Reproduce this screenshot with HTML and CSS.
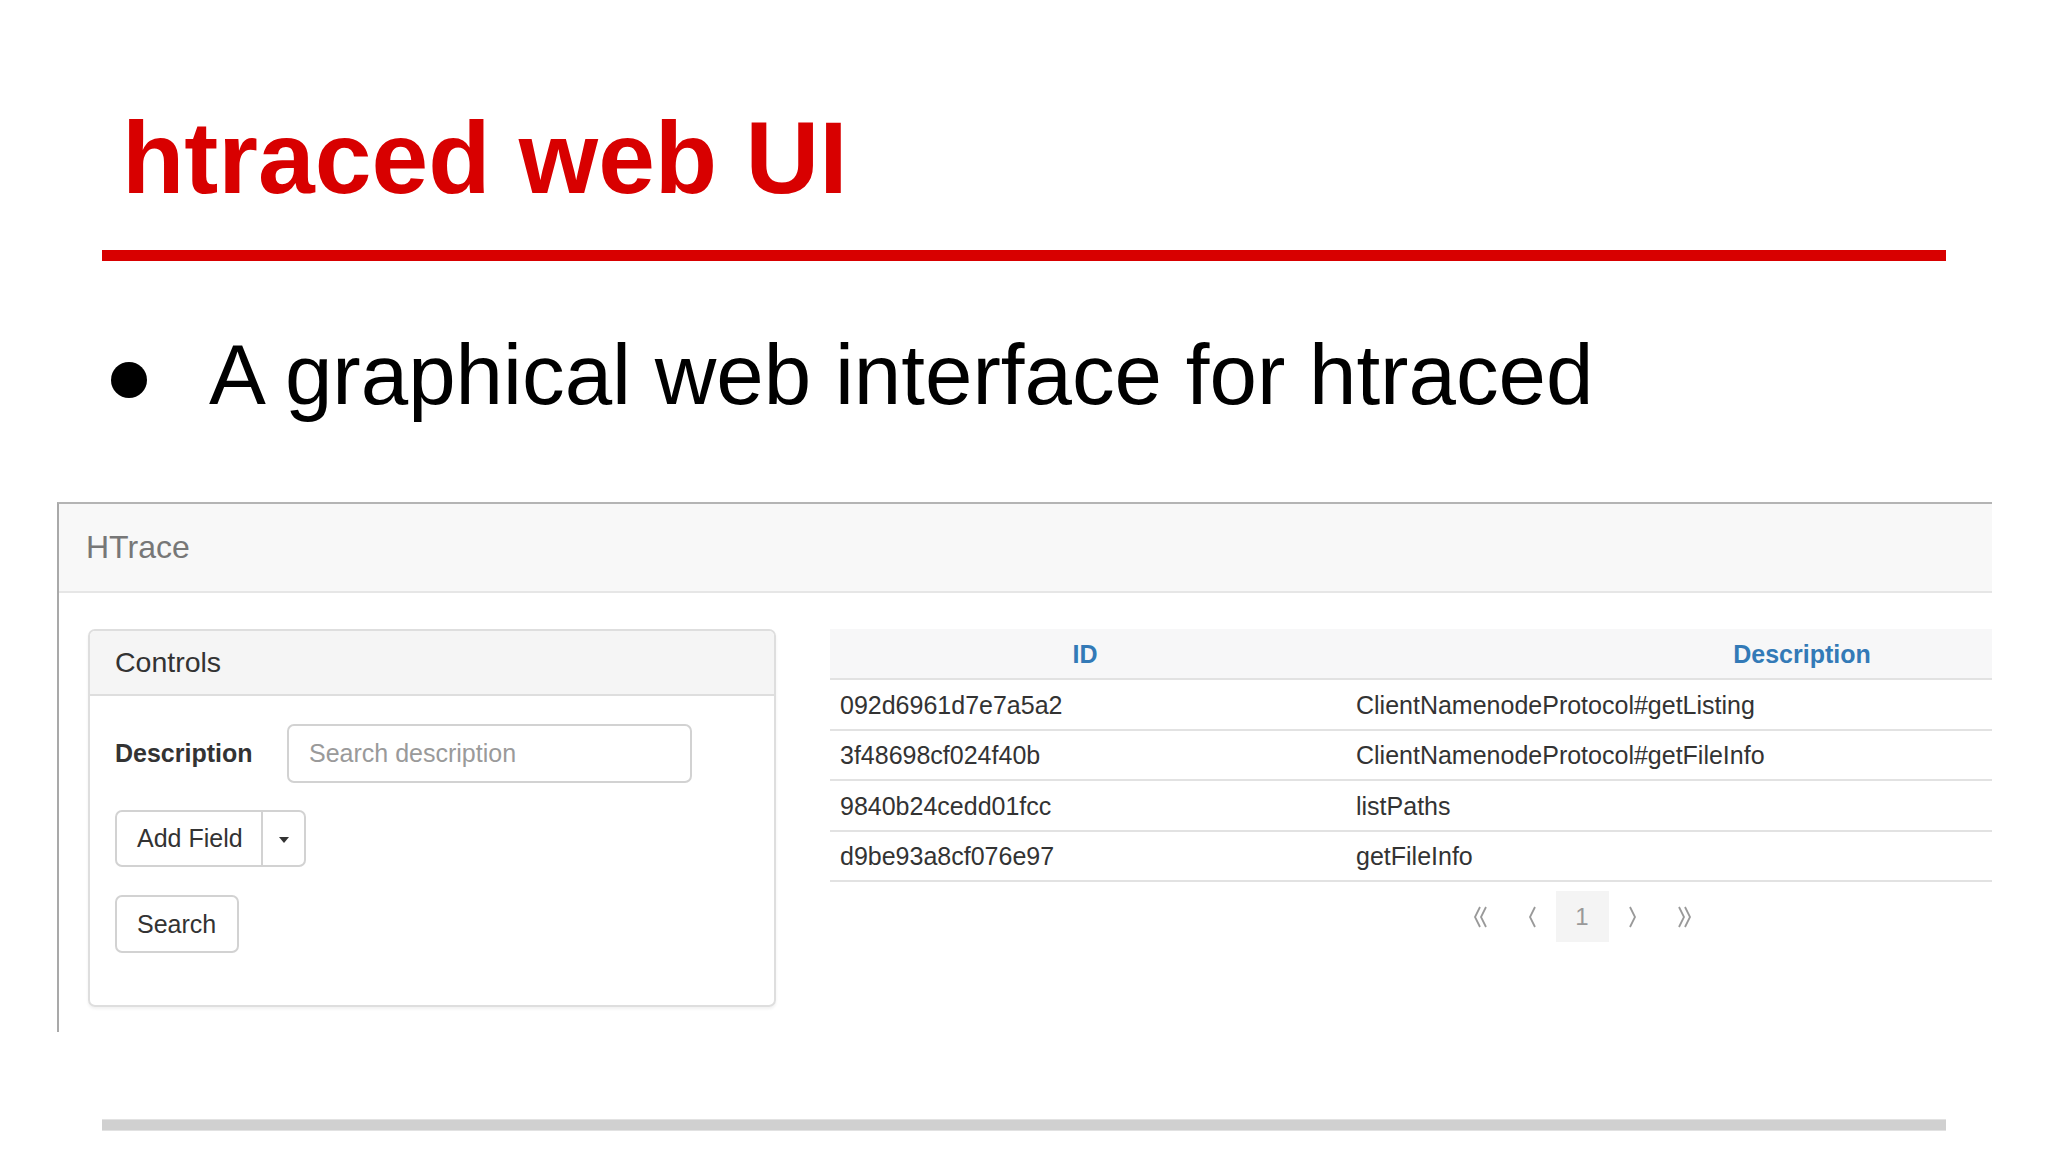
FILE: index.html
```html
<!DOCTYPE html>
<html>
<head>
<meta charset="utf-8">
<title>htraced web UI</title>
<link rel="stylesheet" href="styles.css">
</head>
<body>
<div class="slide">
  <h1 class="title">htraced web UI</h1>
  <div class="rule"></div>
  <div class="bullet-row">
    <span class="dot"></span>
    <span class="bullet-text">A graphical web interface for htraced</span>
  </div>
  <div class="frame">
    <div class="navbar"><span class="brand">HTrace</span></div>
    <div class="content">
      <div class="panel">
        <div class="panel-heading">Controls</div>
        <div class="panel-body">
          <div class="form-row">
            <span class="label">Description</span>
            <div class="input"><span class="placeholder">Search description</span></div>
          </div>
          <div class="btn-group">
            <span class="btn btn-main">Add Field</span>
            <span class="btn btn-caret"><span class="caret"></span></span>
          </div>
          <div class="btn btn-search">Search</div>
        </div>
      </div>
      <div class="results">
        <div class="table">
          <div class="trow thead">
            <div class="th">ID</div>
            <div class="th">Description</div>
          </div>
          <div class="trow">
            <div class="td c1">092d6961d7e7a5a2</div>
            <div class="td c2">ClientNamenodeProtocol#getListing</div>
          </div>
          <div class="trow">
            <div class="td c1">3f48698cf024f40b</div>
            <div class="td c2">ClientNamenodeProtocol#getFileInfo</div>
          </div>
          <div class="trow">
            <div class="td c1">9840b24cedd01fcc</div>
            <div class="td c2">listPaths</div>
          </div>
          <div class="trow">
            <div class="td c1">d9be93a8cf076e97</div>
            <div class="td c2">getFileInfo</div>
          </div>
        </div>
        <div class="pager">
          <span class="pg pg-first"><svg width="16" height="22" viewBox="0 0 16 22"><path d="M7 1 L2 11 L7 21 M13 1 L8 11 L13 21" fill="none" stroke="#999" stroke-width="1.8"/></svg></span>
          <span class="pg pg-prev"><svg width="10" height="22" viewBox="0 0 10 22"><path d="M8 1 L3 11 L8 21" fill="none" stroke="#999" stroke-width="1.8"/></svg></span>
          <span class="pg pg-num">1</span>
          <span class="pg pg-next"><svg width="10" height="22" viewBox="0 0 10 22"><path d="M2 1 L7 11 L2 21" fill="none" stroke="#999" stroke-width="1.8"/></svg></span>
          <span class="pg pg-last"><svg width="16" height="22" viewBox="0 0 16 22"><path d="M3 1 L8 11 L3 21 M9 1 L14 11 L9 21" fill="none" stroke="#999" stroke-width="1.8"/></svg></span>
        </div>
      </div>
    </div>
  </div>
  <div class="footer-bar"></div>
</div>
</body>
</html>
```
FILE: styles.css
```css
html, body {
  margin: 0;
  padding: 0;
}
body {
  width: 2048px;
  height: 1152px;
  overflow: hidden;
  background: #ffffff;
  font-family: "Liberation Sans", Arial, sans-serif;
}
.slide {
  padding-top: 107px;
}
.title {
  margin: 0 0 0 122px;
  font-size: 102px;
  line-height: 102px;
  font-weight: bold;
  color: #d80000;
  white-space: nowrap;
}
.rule {
  margin: 41px 0 0 102px;
  width: 1844px;
  height: 11px;
  background: #d80000;
}
.bullet-row {
  display: flex;
  align-items: flex-start;
  margin-top: 71px;
  height: 85px;
}
.dot {
  width: 36px;
  height: 36px;
  border-radius: 50%;
  background: #000;
  margin: 30px 0 0 111px;
  flex: none;
}
.bullet-text {
  margin-left: 62px;
  font-size: 85.3px;
  line-height: 85px;
  color: #000;
  white-space: nowrap;
}
.frame {
  margin: 85px 0 0 57px;
  width: 1935px;
  height: 530px;
  box-sizing: border-box;
  border-top: 2px solid #b4b4b4;
  border-left: 2px solid #a9a9a9;
  overflow: hidden;
  background: #fff;
}
.navbar {
  height: 87px;
  background: #f8f8f8;
  border-bottom: 2px solid #e6e6e6;
  display: flex;
  align-items: center;
  padding-left: 27px;
}
.brand {
  font-size: 32px;
  color: #777;
}
.content {
  display: flex;
  align-items: flex-start;
  padding: 35px 0 0 29px;
}
.panel {
  width: 688px;
  margin-top: 1px;
  flex: none;
  box-sizing: border-box;
  border: 2px solid #dedede;
  border-radius: 7px;
  box-shadow: 0 2px 3px rgba(0,0,0,0.06);
  overflow: hidden;
  color: #333;
}
.panel-heading {
  height: 65px;
  background: #f5f5f5;
  border-bottom: 2px solid #dedede;
  display: flex;
  align-items: center;
  padding-left: 25px;
  box-sizing: border-box;
  font-size: 28.5px;
}
.panel-body {
  padding: 28px 25px 52px;
}
.form-row {
  display: flex;
  align-items: center;
  height: 59px;
}
.label {
  font-weight: bold;
  font-size: 25px;
  width: 172px;
  flex: none;
}
.input {
  width: 405px;
  height: 59px;
  box-sizing: border-box;
  border: 2px solid #d2d2d2;
  border-radius: 7px;
  display: flex;
  align-items: center;
  padding-left: 20px;
}
.placeholder {
  font-size: 25px;
  color: #9a9a9a;
}
.btn-group {
  display: flex;
  margin-top: 27px;
  height: 57px;
}
.btn {
  box-sizing: border-box;
  border: 2px solid #d2d2d2;
  font-size: 25px;
  color: #333;
  display: flex;
  align-items: center;
  background: #fff;
}
.btn-main {
  width: 148px;
  padding-left: 20px;
  border-radius: 7px 0 0 7px;
}
.btn-caret {
  width: 43px;
  border-left: none;
  border-radius: 0 7px 7px 0;
  justify-content: center;
}
.caret {
  width: 0;
  height: 0;
  border-left: 5px solid transparent;
  border-right: 5px solid transparent;
  border-top: 6px solid #333;
  margin-top: 3px;
}
.btn-search {
  margin-top: 28px;
  width: 124px;
  height: 58px;
  padding-left: 20px;
  border-radius: 7px;
}
.results {
  margin-left: 54px;
  flex: none;
}
.table {
  width: 1434px;
  margin-top: 1px;
  color: #333;
  font-size: 25px;
}
.trow {
  display: grid;
  grid-template-columns: 510px 924px;
  height: 50.5px;
  box-sizing: border-box;
  border-bottom: 2px solid #e2e2e2;
  align-items: center;
  padding-top: 2px;
}
.thead {
  height: 51px;
  background: #f7f7f8;
}
.th {
  text-align: center;
  font-weight: bold;
  color: #337ab7;
}
.c1 {
  padding-left: 10px;
}
.c2 {
  padding-left: 16px;
}
.pager {
  width: 1504px;
  margin-top: 9px;
  display: flex;
  justify-content: center;
  height: 51px;
}
.pg {
  display: flex;
  align-items: center;
  justify-content: center;
  height: 51px;
}
.pg-first, .pg-last {
  width: 54px;
}
.pg-prev, .pg-next {
  width: 48px;
}
.pg-num {
  width: 53px;
  background: #f4f4f4;
  color: #999;
  font-size: 24px;
}
.footer-bar {
  margin: 87px 0 0 102px;
  width: 1844px;
  height: 12px;
  box-sizing: border-box;
  background: #d0d0d0;
  border-top: 1px solid #e2e2e2;
  border-bottom: 1px solid #e2e2e2;
}
```
